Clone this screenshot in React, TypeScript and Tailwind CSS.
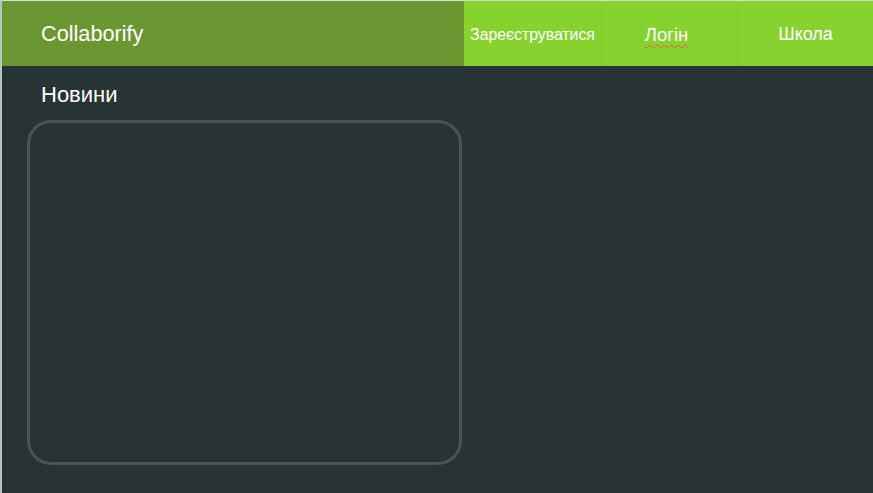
export default function App() {
  return (
    <div className="flex h-[493px] w-[873px] flex-col overflow-hidden border-l-2 border-t border-l-[#b9c3c3] border-t-[#d8dcd8] bg-[#273334] font-['Liberation_Sans',Arial,sans-serif] text-white">
      <header className="flex h-[65px] shrink-0">
        <div className="flex w-[462px] items-center bg-[#6b9733] pl-[39px] pt-[2px] text-[21.7px]">Collaborify</div>
        <nav className="flex flex-1 bg-[#88d22f] pt-[2px]">
          <a className="flex w-[137px] items-center justify-center whitespace-nowrap text-[15.8px]">Зареєструватися</a>
          <a className="flex w-[136px] items-center justify-center border-l border-[#84cc2d] pr-[6px] text-[18.5px]">
            <span className="underline decoration-wavy decoration-[#e0604a] decoration-1 underline-offset-[3px]">Логін</span>
          </a>
          <a className="flex flex-1 items-center justify-center border-l border-[#84cc2d] text-[18px]">Школа</a>
        </nav>
      </header>
      <main className="flex flex-col px-[25px] pt-[16px]">
        <h2 className="pl-[14px] text-[22px] leading-[26px]">Новини</h2>
        <div className="mt-[12px] h-[345px] w-[435px] rounded-[24px] border-[3px] border-[#4c5252]"></div>
      </main>
    </div>
  );
}
